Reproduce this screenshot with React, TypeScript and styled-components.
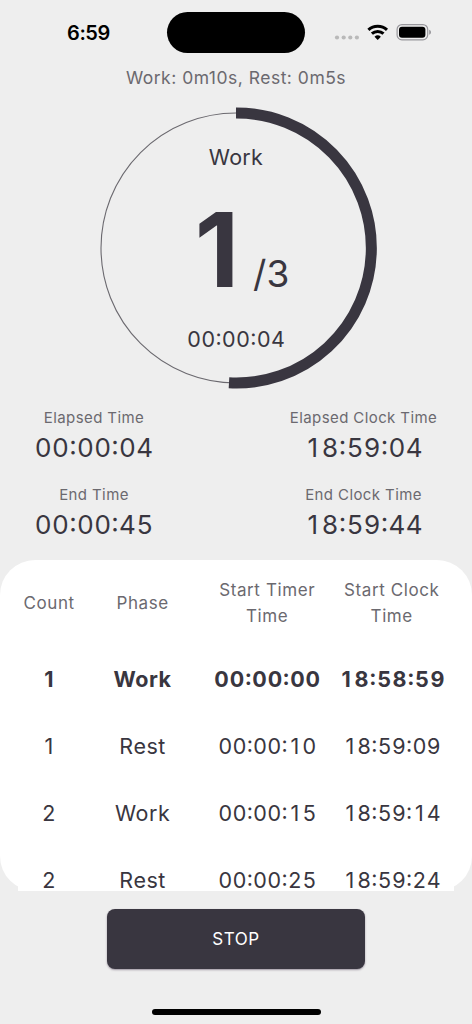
import React from "react";
import styled, { createGlobalStyle } from "styled-components";

const INK = "#393640";
const MUTED = "#6b696f";

const GlobalStyle = createGlobalStyle`
  *, *::before, *::after { box-sizing: border-box; }
  body { margin: 0; background: #eeeeee; font-family: Inter, "Liberation Sans", sans-serif; }
`;

const Screen = styled.main`
  display: flex;
  flex-direction: column;
  width: 472px;
  height: 1024px;
  overflow: hidden;
  background: #eeeeee;
  color: ${INK};
`;

const StatusBar = styled.header`
  display: grid;
  grid-template-columns: 167px 138px 1fr;
  align-items: center;
  height: 65px;
  flex: none;
`;

const Clock = styled.span`
  padding-left: 67px;
  font-size: 20px;
  line-height: 24px;
  font-weight: 600;
  letter-spacing: -0.4px;
  color: #000;
`;

const Island = styled.div`
  height: 41px;
  border-radius: 21px;
  background: #000;
`;

const StatusIcons = styled.svg`
  display: block;
  margin-left: 29px;
`;

const Line = styled.div<{ $size: number; $height: number; $spacing?: number; $weight?: number; $muted?: boolean }>`
  font-size: ${(p) => p.$size}px;
  line-height: ${(p) => p.$height}px;
  letter-spacing: ${(p) => p.$spacing ?? 0}px;
  font-weight: ${(p) => p.$weight ?? 400};
  color: ${(p) => (p.$muted ? MUTED : INK)};
  text-align: center;
  white-space: nowrap;
`;

const Digit = styled.span<{ $bold?: boolean }>`
  display: inline-block;
  width: ${(p) => (p.$bold ? 0.718 : 0.665)}em;
`;

const Colon = styled.span<{ $bold?: boolean }>`
  display: inline-block;
  width: ${(p) => (p.$bold ? 0.33 : 0.29)}em;
  font-feature-settings: "case";
`;

const Dial = styled.section`
  display: grid;
  width: 290px;
  height: 290px;
  margin: 13px auto 0;
  flex: none;
`;

const Ring = styled.svg`
  grid-area: 1 / 1;
`;

const DialContent = styled.div`
  grid-area: 1 / 1;
  display: flex;
  flex-direction: column;
  align-items: center;
  padding-top: 40px;
`;

const Rounds = styled.div`
  display: flex;
  align-items: baseline;
  justify-content: center;
  height: 120px;
  margin: 19px 0 15px;
  padding-left: 12px;
`;

const CurrentRound = styled.span`
  font-size: 103px;
  line-height: 120px;
  font-weight: 700;
`;

const TotalRounds = styled.span`
  margin-left: 14px;
  font-size: 37px;
  line-height: 44px;
`;

const Stats = styled.section`
  display: flex;
  justify-content: space-between;
  padding: 0 35px 0 36px;
  margin-top: 14px;
  flex: none;
`;

const StatColumn = styled.div<{ $width: number }>`
  display: flex;
  flex-direction: column;
  align-items: center;
  gap: 17px;
  width: ${(p) => p.$width}px;
`;

const Stat = styled.div``;

const Card = styled.section`
  height: 331px;
  margin-top: 16px;
  padding: 0 18px;
  background: #fff;
  border-radius: 35px;
  flex: none;
`;

const Schedule = styled.div`
  height: 331px;
  overflow: hidden;
  background: linear-gradient(#fff, #fff) bottom / 100% 60px no-repeat;
`;

const Row = styled.div`
  display: grid;
  grid-template-columns: 62.3px 124.6px 124.6px 124.5px;
  align-items: center;
  height: 67px;
`;

const HeadingRow = styled(Row)`
  height: 85px;
  padding-top: 2px;
`;

const StopButton = styled.button`
  width: 258px;
  height: 60px;
  margin: 18px auto 0;
  padding: 0;
  border: 0;
  border-radius: 8px;
  background: ${INK};
  color: #fff;
  font: 400 17px/24px Inter, sans-serif;
  letter-spacing: 0.6px;
  box-shadow: 0 1px 2px rgba(57, 40, 66, 0.45);
  flex: none;
`;

const HomeIndicator = styled.div`
  width: 169px;
  height: 6px;
  margin: 40px auto 0;
  border-radius: 3px;
  background: #000;
  flex: none;
`;

const rows = [
  ["1", "Work", "00:00:00", "18:58:59"],
  ["1", "Rest", "00:00:10", "18:59:09"],
  ["2", "Work", "00:00:15", "18:59:14"],
  ["2", "Rest", "00:00:25", "18:59:24"],
];

const headings = [["Count"], ["Phase"], ["Start Timer", "Time"], ["Start Clock", "Time"]];

function Time({ value, bold }: { value: string; bold?: boolean }) {
  return (
    <>
      {value.split("").map((char, i) =>
        char === ":" ? <Colon key={i} $bold={bold}>:</Colon> : <Digit key={i} $bold={bold}>{char}</Digit>
      )}
    </>
  );
}

function StatItem({ label, value }: { label: string; value: string }) {
  return (
    <Stat>
      <Line $size={15} $height={22} $spacing={0.4} $muted>{label}</Line>
      <Line $size={26} $height={38}><Time value={value} /></Line>
    </Stat>
  );
}

export default function App() {
  return (
    <>
      <GlobalStyle />
      <Screen>
        <StatusBar>
          <Clock>6:59</Clock>
          <Island />
          <StatusIcons width="100" height="24" viewBox="334 20 100 24">
            <g fill="#b9b9b9">
              <circle cx="337" cy="36.5" r="2.1" />
              <circle cx="343.7" cy="36.5" r="2.1" />
              <circle cx="350.3" cy="36.5" r="2.1" />
              <circle cx="356.9" cy="36.5" r="2.1" />
            </g>
            <g fill="none" stroke="#000" strokeWidth="3">
              <path d="M368.4 28.9a13.4 13.4 0 0 1 18.6 0" />
              <path d="M371.9 32.7a8.4 8.4 0 0 1 11.6 0" />
            </g>
            <path d="M374.5 35.8a4.7 4.7 0 0 1 6.4 0l-3.2 3.2z" fill="#000" />
            <rect x="397.1" y="23.6" width="30.6" height="15.2" rx="4.8" fill="none" stroke="#98979c" strokeWidth="1.2" />
            <rect x="399" y="25.7" width="26.4" height="11" rx="3" fill="#000" />
            <path d="M429.2 28.7c2.4.8 2.4 4.2 0 5z" fill="#98979c" />
          </StatusIcons>
        </StatusBar>
        <Line $size={17.5} $height={25} $spacing={0.5} $muted>Work: 0m10s, Rest: 0m5s</Line>
        <Dial>
          <Ring width="290" height="290" viewBox="91 103 290 290" fill="none" stroke={INK}>
            <circle cx="236" cy="248" r="135" stroke="#6b696f" strokeWidth="1.1" />
            <path d="M236 113A135 135 0 1 1 229 382.8" strokeWidth="11" />
          </Ring>
          <DialContent>
            <Line $size={21.5} $height={28} $spacing={0.3}>Work</Line>
            <Rounds>
              <CurrentRound>1</CurrentRound>
              <TotalRounds>/3</TotalRounds>
            </Rounds>
            <Line $size={21.5} $height={28}><Time value="00:00:04" /></Line>
          </DialContent>
        </Dial>
        <Stats>
          <StatColumn $width={116}>
            <StatItem label="Elapsed Time" value="00:00:04" />
            <StatItem label="End Time" value="00:00:45" />
          </StatColumn>
          <StatColumn $width={147}>
            <StatItem label="Elapsed Clock Time" value="18:59:04" />
            <StatItem label="End Clock Time" value="18:59:44" />
          </StatColumn>
        </Stats>
        <Card>
          <Schedule>
            <HeadingRow>
              {headings.map((lines) => (
                <div key={lines.join()}>
                  {lines.map((text) => (
                    <Line key={text} $size={17} $height={25.5} $spacing={0.6} $muted>{text}</Line>
                  ))}
                </div>
              ))}
            </HeadingRow>
            {rows.map((cells, i) => (
              <Row key={i}>
                {cells.map((cell, j) => (
                  <Line key={j} $size={21.5} $height={22} $spacing={j > 1 ? 0 : 0.5} $weight={i === 0 ? 700 : 400}>
                    {j > 1 ? <Time value={cell} bold={i === 0} /> : cell}
                  </Line>
                ))}
              </Row>
            ))}
          </Schedule>
        </Card>
        <StopButton>STOP</StopButton>
        <HomeIndicator />
      </Screen>
    </>
  );
}
